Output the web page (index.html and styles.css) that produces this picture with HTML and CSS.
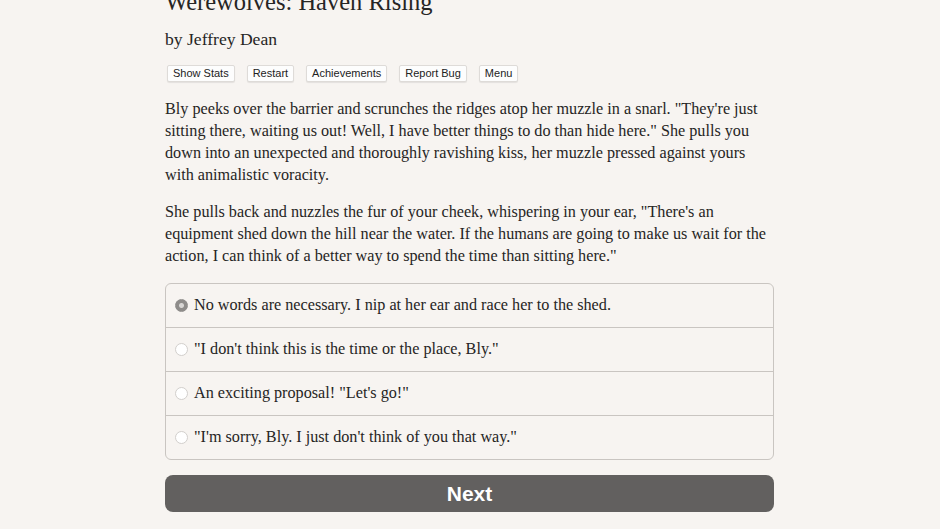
FILE: index.html
```html
<!DOCTYPE html>
<html>
<head>
<meta charset="utf-8">
<link rel="stylesheet" href="styles.css">
</head>
<body>
<main class="page">
  <h1 class="title">Werewolves: Haven Rising</h1>
  <h2 class="author">by Jeffrey Dean</h2>
  <div class="toolbar">
    <button class="tool">Show Stats</button>
    <button class="tool">Restart</button>
    <button class="tool">Achievements</button>
    <button class="tool">Report Bug</button>
    <button class="tool">Menu</button>
  </div>
  <p class="para">Bly peeks over the barrier and scrunches the ridges atop her muzzle in a snarl. "They're just sitting there, waiting us out! Well, I have better things to do than hide here." She pulls you down into an unexpected and thoroughly ravishing kiss, her muzzle pressed against yours with animalistic voracity.</p>
  <p class="para wide">She pulls back and nuzzles the fur of your cheek, whispering in your ear, "There's an<br>equipment shed down the hill near the water. If the humans are going to make us wait for the action, I can think of a better way to spend the time than sitting here."</p>
  <div class="choices">
    <label class="choice"><span class="radio checked"></span><span>No words are necessary. I nip at her ear and race her to the shed.</span></label>
    <label class="choice"><span class="radio"></span><span>"I don't think this is the time or the place, Bly."</span></label>
    <label class="choice"><span class="radio"></span><span>An exciting proposal! "Let's go!"</span></label>
    <label class="choice"><span class="radio"></span><span>"I'm sorry, Bly. I just don't think of you that way."</span></label>
  </div>
  <button class="next">Next</button>
</main>
</body>
</html>
```

FILE: styles.css
```css
html, body {
  margin: 0;
  padding: 0;
  background: #f7f4f1;
  overflow: hidden;
}
.page {
  width: 609px;
  margin: 0 0 0 165px;
  color: #262524;
  font-family: "Liberation Serif", serif;
}
.title {
  margin: -15px 0 0 0;
  font-weight: normal;
  font-size: 24.5px;
  line-height: 34px;
}
.author {
  margin: 9px 0 0 0;
  font-weight: normal;
  font-size: 17.6px;
  line-height: 22px;
}
.toolbar {
  display: flex;
  gap: 12px;
  margin: 15px 0 0 2px;
}
.tool {
  font-family: "Liberation Sans", sans-serif;
  font-size: 11px;
  line-height: 13px;
  padding: 1px 5px;
  background: #fdfdfd;
  border: 1px solid #dedbd8;
  border-radius: 2px;
  color: #222;
  box-shadow: 0 1px 1px rgba(0,0,0,0.08);
}
.para {
  font-size: 16.2px;
  line-height: 22px;
  margin: 15px 0 0 0;
}
.para:first-of-type {
  margin-top: 16px;
}
.para.wide {
  margin-right: -36px;
}
.choices {
  margin-top: 16px;
  border: 1px solid #c9c5c1;
  border-radius: 6px;
}
.choice {
  display: flex;
  align-items: center;
  height: 43px;
  padding-left: 9px;
  gap: 6px;
  font-size: 16.2px;
  border-top: 1px solid #c9c5c1;
}
.choice:first-child {
  border-top: none;
}
.radio {
  width: 13px;
  height: 13px;
  border-radius: 50%;
  border: 1px solid #d2cfcc;
  background: #fff;
  box-sizing: border-box;
  flex: none;
}
.radio.checked {
  border: 1px solid #8e8c8a;
  background: radial-gradient(circle, #d8d6d4 0 2px, #8e8c8a 3px);
}
.next {
  display: block;
  width: 609px;
  height: 37px;
  margin-top: 15px;
  border: none;
  border-radius: 8px;
  background: #62605f;
  color: #fff;
  font-family: "Liberation Sans", sans-serif;
  font-weight: bold;
  font-size: 21px;
}
```
